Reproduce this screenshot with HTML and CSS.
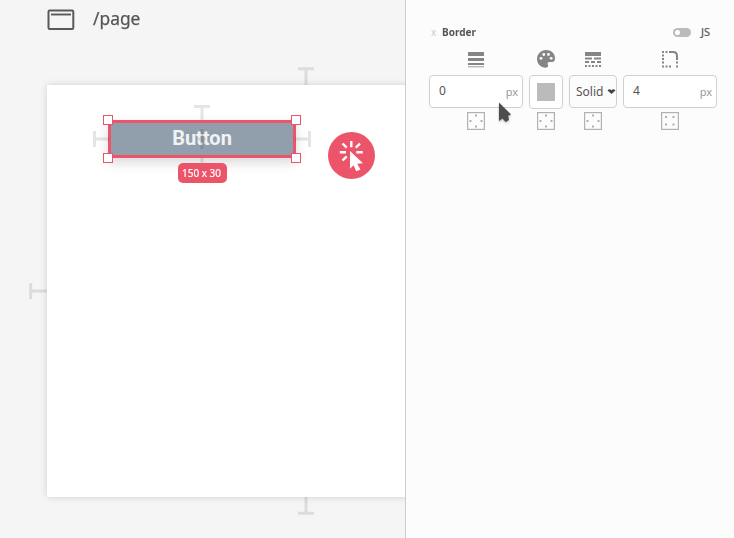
FILE: index.html
```
<!DOCTYPE html>
<html lang="en">
<head>
<meta charset="utf-8">
<title>Page editor</title>
<link rel="stylesheet" href="styles.css">
</head>
<body>
<main class="editor">
  <section class="workspace">
    <header class="page-header">
      <svg class="window-icon" width="28" height="22" viewBox="0 0 28 22"><rect x="1.5" y="1.5" width="24.8" height="18.5" rx="1.2" fill="none" stroke="#595959" stroke-width="2"/><path d="M4 5.5h20" stroke="#595959" stroke-width="1.9"/></svg>
      <h1 class="page-name">/page</h1>
    </header>
    <div class="artboard">
      <svg class="guide board-top" width="16" height="18"><path d="M0 1.7h16M8 1v17"/></svg>
      <svg class="guide board-left" width="18" height="16"><path d="M1.7 0v16M1 8h17"/></svg>
      <svg class="guide board-bottom" width="16" height="18"><path d="M0 16.3h16M8 0v17"/></svg>
      <div class="selection">
        <span class="label">Button</span>
        <svg class="guide sel-top" width="16" height="15"><path d="M0 1.5h16M8 0v15"/></svg>
        <svg class="guide sel-left" width="16" height="16"><path d="M1.5 0v16M0 8h16"/></svg>
        <svg class="guide sel-right" width="16" height="16"><path d="M14.5 0v16M0 8h16"/></svg>
        <svg class="guide sel-center" width="16" height="20"><path d="M4 10h8M8 0v20"/></svg>
        <svg class="guide sel-bottom" width="16" height="16"><path d="M0 14.5h16M8 0v16"/></svg>
        <i class="handle nw"></i><i class="handle ne"></i><i class="handle sw"></i><i class="handle se"></i>
        <span class="size"><span class="narrow">150 x 30</span></span>
      </div>
      <div class="click-badge">
        <svg width="48" height="48" viewBox="0 0 48 48"><path d="M23.3 9v6.2M14.5 11.5l4.2 4.2M32 11.5l-4.2 4.2M11.8 20.2H18M28.3 20.2h6.5M14.5 28.5l4.2-4.2" stroke="#fff" stroke-width="2.4"/><path d="M22 19l13 12.3-5.8.5 3.3 5.7-4.3 1.8-2.6-6.1-3.6 3.5z" fill="#fff"/></svg>
      </div>
    </div>
  </section>
  <aside class="panel">
    <div class="panel-header">
      <span class="close">x</span><h2 class="title">Border</h2>
      <span class="toggle"></span><span class="js">JS</span>
    </div>
    <div class="controls">
      <div class="control">
        <svg class="kind" width="18" height="20"><path fill="#858585" d="M1 3h16v4H1zM1 9h16v3H1zM1 14h16v2H1z"/><path fill="#b8b8b8" d="M1 17h16v1.4H1z"/></svg>
        <div class="field"><span class="value">0</span><span class="unit">px</span></div>
        <svg class="sides" width="18" height="18"><use href="#edges"/></svg>
      </div>
      <div class="control">
        <svg class="kind" width="18" height="20"><path fill="#858585" d="M9 1C4 1 0 5 0 10s4 8.7 8.6 8.7c2.3 0 3.1-1.5 2.2-3.1-.7-1.3.1-2.6 1.7-2.6H15c2 0 3-1.6 3-4C18 4.4 14 1 9 1z"/><g fill="#fcfcfc"><circle cx="6.8" cy="5.5" r="1.4"/><circle cx="11.5" cy="5.5" r="1.4"/><circle cx="4" cy="9.3" r="1.4"/><circle cx="14.2" cy="9.3" r="1.4"/></g></svg>
        <div class="field color"><span class="swatch"></span></div>
        <svg class="sides" width="18" height="18"><use href="#edges"/></svg>
      </div>
      <div class="control">
        <svg class="kind" width="18" height="20"><path fill="#858585" d="M1 3h16v4H1zM1 8.5h7v2H1zM10 8.5h7v2h-7zM1 12h4v2H1zM7 12h4v2H7zM13 12h4v2h-4zM1 16h2v2H1zM4.5 16h2v2h-2zM8 16h2v2H8zM11.5 16h2v2h-2zM15 16h2v2h-2z"/></svg>
        <div class="field style"><span class="value">Solid</span><svg width="9" height="7"><path d="M.5 2.5Q2.5 0 4.5 2.2 6.5 0 8.5 2.5L4.5 6z" fill="#444"/></svg></div>
        <svg class="sides" width="18" height="18"><use href="#edges"/></svg>
      </div>
      <div class="control">
        <svg class="kind" width="18" height="20"><path d="M8 3h4q4 0 4 4v4" fill="none" stroke="#858585" stroke-width="2"/><path fill="#858585" d="M1 2h2v2H1zM4.5 2h2v2h-2zM1 5.5h2v2H1zM1 9h2v2H1zM1 12.5h2v2H1zM1 16.5h2v2H1zM4.5 16.5h2v2h-2zM8 16.5h2v2H8zM15 12.5h2v2h-2zM15 16.5h2v2h-2z"/></svg>
        <div class="field"><span class="value">4</span><span class="unit">px</span></div>
        <svg class="sides" width="18" height="18"><rect x=".6" y=".6" width="16.8" height="16.8" fill="none" stroke="#b2b2b2" stroke-width="1.2"/><path fill="#b0b0b0" d="M4 4h2v2H4zM11.5 4h2v2h-2zM4 11.5h2v2H4zM11.5 11.5h2v2h-2z"/></svg>
      </div>
    </div>
    <svg class="cursor" width="16" height="24" viewBox="0 0 16 24"><path d="M2 .5v18.5l3.5-2.6 3.2 3.5 3.3-2-.8-4.2 2.8-1.2z" fill="#4d4d4d"/></svg>
  </aside>
</main>
<svg class="defs" width="0" height="0"><defs><g id="edges"><rect x=".6" y=".6" width="16.8" height="16.8" fill="none" stroke="#b2b2b2" stroke-width="1.2"/><path fill="#b0b0b0" d="M8 2.5h2v2H8zM8 13.5h2v2H8zM2.5 8h2v2h-2zM13.5 8h2v2h-2z"/></g></defs></svg>
</body>
</html>
```
FILE: styles.css
```
* { box-sizing: border-box; }
body { margin: 0; overflow: hidden; color: #555; font-family: "Noto Sans", sans-serif; }
svg { display: block; flex: none; }
.defs { position: absolute; }
.editor { display: flex; width: 734px; height: 538px; }
.workspace { width: 405px; padding-left: 47px; background: #f5f5f5; overflow: hidden; }
.page-header { display: flex; height: 85px; padding-top: 5px; gap: 18px; }
.window-icon { margin-top: 4px; }
.page-name { margin: 0; font-size: 18px; line-height: 27px; font-weight: 400; -webkit-text-stroke: .25px #555; transform: scaleX(.965); transform-origin: left; }
.artboard { position: relative; width: 500px; height: 412px; background: #fff; box-shadow: 0 0 7px rgba(0,0,0,.15); }
.guide { position: absolute; fill: none; stroke: rgba(0,0,0,.1); stroke-width: 3; }
.board-top { left: 251px; top: -18px; }
.board-left { left: -18px; top: 198px; }
.board-bottom { left: 251px; top: 412px; }
.selection { position: absolute; left: 61px; top: 35px; width: 188px; height: 38px; border: 3px solid #ec5569; background: #919eab; box-shadow: 0 5px 12px rgba(0,0,0,.15); display: flex; align-items: center; justify-content: center; }
.label { color: #f1f2f3; font: 700 20px/28px Roboto, sans-serif; margin-top: -2px; }
.sel-top { left: 83px; top: -18px; }
.sel-left { left: -18px; top: 8px; }
.sel-right { right: -18px; top: 8px; }
.sel-center { left: 83px; top: 6px; }
.sel-bottom { left: 83px; top: 35px; }
.handle { position: absolute; width: 10px; height: 10px; background: #fff; border: 1.3px solid #ec5569; }
.nw { left: -8px; top: -8px; }
.ne { right: -8px; top: -8px; }
.sw { left: -8px; bottom: -8px; }
.se { right: -8px; bottom: -8px; }
.size { position: absolute; left: 67px; top: 40px; width: 49px; height: 20px; border-radius: 5px; background: #ec5569; color: #fff; font-size: 11px; line-height: 20px; display: flex; justify-content: center; white-space: nowrap; }
.narrow { -webkit-text-stroke: .2px #fff; margin-left: -2px; transform: scaleX(.91); }
.click-badge { position: absolute; left: 281px; top: 47px; width: 47px; height: 47px; border-radius: 50%; background: #ec5569; }
.panel { position: relative; width: 329px; padding: 24px 17px 0 23px; border-left: 1px solid #ccc; background: #fcfcfc; }
.panel-header { display: flex; align-items: center; height: 16px; padding: 0 7px 0 2px; font-size: 11px; }
.close { color: #ccc; font-size: 10px; width: 11px; }
.title { margin: -1px 0 0; font-size: 11px; transform: scaleX(.91); transform-origin: left; }
.toggle { width: 18px; height: 9px; margin-left: auto; border-radius: 5px; background: #bbb; padding: 2px; }
.toggle::before { content: ""; display: block; width: 5px; height: 5px; border-radius: 50%; background: #fff; }
.js { margin: -2px 0 0 10px; width: 9px; -webkit-text-stroke: .2px #555; }
.controls { display: grid; grid-template-columns: 94px 34px 48px 94px; gap: 6px; margin-top: 9px; }
.control { display: flex; flex-direction: column; align-items: center; }
.kind { margin-bottom: 6px; }
.field { display: flex; align-items: center; width: 100%; height: 33px; padding: 0 4px 0 9px; border: 1px solid #d0d0d0; border-radius: 4px; background: #fff; font-size: 12px; }
.value { margin-top: -2px; }
.unit { margin-left: auto; color: #999; font-size: 11px; }
.color { padding: 0; justify-content: center; height: 34px; margin-bottom: -1px; }
.swatch { width: 18px; height: 18px; background: #bbb; }
.style { padding: 0 0 0 6px; background: #fcfcfc; gap: 4px; }
.style .value { margin-top: -1px; }
.sides { margin-top: 4px; }
.cursor { position: absolute; left: 91px; top: 102px; filter: drop-shadow(0 1px 1px rgba(0,0,0,.3)); }
```
